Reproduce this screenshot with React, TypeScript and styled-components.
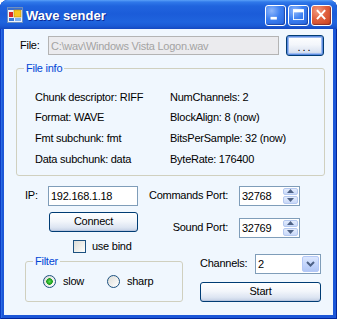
import React from "react";
import styled, { createGlobalStyle } from "styled-components";

const GlobalStyle = createGlobalStyle`
  html, body {
    margin: 0;
    padding: 0;
    background: #ffffff;
  }
  body {
    font-family: "Liberation Sans", Arial, sans-serif;
    font-size: 11px;
    color: #000;
  }
`;

const Window = styled.div`
  width: 337px;
  height: 319px;
  box-sizing: border-box;
  display: flex;
  flex-direction: column;
  border-radius: 8px 8px 0 0;
  overflow: hidden;
  background: #1c57d8;
  box-shadow: inset 1px 0 #0b3cc4, inset -1px -1px #00259c, inset 2px 0 #2a6be4;
`;

const TitleBar = styled.div`
  height: 29px;
  flex: none;
  display: flex;
  align-items: center;
  padding: 0 5px 0 7px;
  background: linear-gradient(
    180deg,
    #5aa0f8 0px,
    #3079ea 2px,
    #2064de 6px,
    #1b5cd9 14px,
    #1f64de 22px,
    #1b5ad5 26px,
    #1448c0 29px
  );
`;

const TitleIcon = styled.svg`
  width: 16px;
  height: 16px;
  flex: none;
`;

const TitleText = styled.div`
  flex: 1;
  margin-left: 3px;
  padding-top: 1px;
  color: #ffffff;
  font-family: "Liberation Sans", Arial, sans-serif;
  font-weight: bold;
  font-size: 13px;
  text-shadow: 1px 1px #0c2a96;
`;

const CaptionButtons = styled.div`
  display: flex;
  gap: 2px;
  margin-top: 2px;
`;

const CaptionButton = styled.div<{ $close?: boolean }>`
  width: 21px;
  height: 21px;
  box-sizing: border-box;
  border: 1px solid #ffffff;
  border-radius: 3px;
  display: flex;
  align-items: center;
  justify-content: center;
  background: ${({ $close }) =>
    $close
      ? "radial-gradient(circle at 30% 25%, #f29a80 0%, #e0603e 45%, #c93e1c 100%)"
      : "radial-gradient(circle at 30% 25%, #8fb7fb 0%, #3c7ff1 45%, #2462dc 100%)"};
  box-shadow: inset -1px -1px 1px rgba(0, 0, 60, 0.35);
`;

const Client = styled.div`
  flex: 1;
  margin: 0 4px 4px;
  background: #f0f7fe;
  display: flex;
  flex-direction: column;
  padding-top: 6px;
  letter-spacing: -0.25px;
`;

const FileRow = styled.div`
  display: flex;
  align-items: center;
  height: 21px;
  padding-left: 16px;
`;

const Label = styled.span<{ $width?: number }>`
  ${({ $width }) => ($width ? `width: ${$width}px; flex: none;` : "")}
  white-space: nowrap;
  line-height: 13px;
`;

const TextBox = styled.div<{ $disabled?: boolean; $width: number; $height: number }>`
  width: ${({ $width }) => $width}px;
  height: ${({ $height }) => $height}px;
  box-sizing: border-box;
  flex: none;
  display: flex;
  align-items: center;
  padding-left: 2px;
  white-space: nowrap;
  overflow: hidden;
  border: 1px solid ${({ $disabled }) => ($disabled ? "#b4b4b4" : "#7f9db9")};
  background: ${({ $disabled }) => ($disabled ? "#ebebee" : "#ffffff")};
  color: ${({ $disabled }) => ($disabled ? "#a3a3a3" : "#000000")};
`;

const Button = styled.div<{ $focused?: boolean }>`
  box-sizing: border-box;
  display: flex;
  align-items: center;
  justify-content: center;
  border: 1px solid #003c74;
  border-radius: 3px;
  background: linear-gradient(180deg, #ffffff 0%, #f3f6fb 45%, #dde5f2 80%, #c3cfe4 100%);
  box-shadow: ${({ $focused }) =>
    $focused
      ? "inset 0 0 0 1px #5d8be0, inset 0 0 0 2px #9dbcf0"
      : "inset 0 -1px #b9c6de"};
  color: #000;
  line-height: 13px;
`;

const BrowseButton = styled(Button)`
  width: 38px;
  height: 21px;
  margin-left: 7px;
  padding-top: 4px;
  font-size: 11px;
  letter-spacing: 2px;
`;

const GroupBox = styled.fieldset`
  margin: 0;
  padding: 0;
  min-width: 0;
  border: 1px solid #d0d0bf;
  border-radius: 3px;
`;

const GroupTitle = styled.legend`
  margin-left: 7px;
  padding: 0 2px;
  color: #0046d5;
  line-height: 13px;
  font-size: 11px;
`;

const InfoBox = styled(GroupBox)`
  margin: 6px 8px 0 12px;
`;

const InfoGrid = styled.div`
  display: grid;
  grid-template-columns: 135px auto;
  grid-auto-rows: 20.67px;
  align-items: center;
  padding: 12px 0 5px 18px;
  line-height: 13px;
`;

const SectionA = styled.div`
  display: flex;
  margin-top: 10px;
`;

const LeftA = styled.div`
  width: 140px;
  flex: none;
  display: flex;
  flex-direction: column;
`;

const IPRow = styled.div`
  display: flex;
  align-items: center;
  height: 20px;
  padding-left: 21px;
`;

const ConnectButton = styled(Button)`
  width: 89px;
  height: 20px;
  margin: 6px 0 0 45px;
`;

const RightA = styled.div`
  flex: 1;
  display: flex;
  flex-direction: column;
  gap: 12px;
  padding-right: 33px;
`;

const PortRow = styled.div`
  display: flex;
  justify-content: flex-end;
  align-items: center;
  height: 20px;
`;

const PortLabel = styled(Label)`
  margin-right: 11px;
`;

const Numeric = styled.div`
  width: 61px;
  height: 20px;
  box-sizing: border-box;
  display: flex;
  border: 1px solid #7f9db9;
  background: #ffffff;
`;

const FieldValue = styled.span`
  flex: 1;
  display: flex;
  align-items: center;
  padding-left: 2px;
`;

const SpinColumn = styled.div`
  width: 15px;
  display: flex;
  flex-direction: column;
  gap: 1px;
  padding: 1px 1px 1px 0;
`;

const SpinButton = styled.div`
  flex: 1;
  display: flex;
  align-items: center;
  justify-content: center;
  border: 1px solid #b5c9f0;
  border-radius: 2px;
  background: linear-gradient(180deg, #e3ecfd 0%, #c8d8f8 100%);
`;

const SectionB = styled.div`
  display: flex;
  margin-top: 2px;
`;

const LeftB = styled.div`
  width: 180px;
  flex: none;
  display: flex;
  flex-direction: column;
`;

const CheckRow = styled.div`
  display: flex;
  align-items: center;
  gap: 6px;
  height: 13px;
  padding-left: 69px;
`;

const CheckBox = styled.div`
  width: 13px;
  height: 13px;
  box-sizing: border-box;
  flex: none;
  border: 1px solid #1c5180;
  background: linear-gradient(135deg, #dcdcd7 0%, #f4f4f0 70%, #ffffff 100%);
`;

const FilterBox = styled(GroupBox)`
  width: 158px;
  box-sizing: border-box;
  margin: 2px 0 0 21px;
`;

const RadioRow = styled.div`
  display: flex;
  padding: 7px 0 13px 17px;
`;

const RadioItem = styled.div<{ $width?: number }>`
  display: flex;
  align-items: center;
  gap: 7px;
  ${({ $width }) => ($width ? `width: ${$width}px;` : "")}
  line-height: 13px;
`;

const RadioCircle = styled.div<{ $checked?: boolean }>`
  width: 13px;
  height: 13px;
  box-sizing: border-box;
  flex: none;
  border-radius: 50%;
  border: 1px solid #1c5180;
  background: ${({ $checked }) =>
    $checked
      ? "radial-gradient(circle at 50% 50%, #5fe05b 0, #2cb22a 2px, #1e9a1d 3px, transparent 3.5px), linear-gradient(135deg, #dcdcd7, #ffffff)"
      : "linear-gradient(135deg, #dcdcd7, #ffffff)"};
`;

const RightB = styled.div`
  flex: 1;
  display: flex;
  flex-direction: column;
  padding: 0 12px 0 16px;
`;

const ChannelsRow = styled.div`
  display: flex;
  align-items: center;
  height: 20px;
  margin-top: 14px;
`;

const ComboBox = styled.div`
  width: 66px;
  height: 20px;
  box-sizing: border-box;
  flex: none;
  margin-left: auto;
  display: flex;
  border: 1px solid #7f9db9;
  background: #ffffff;
`;

const DropButton = styled.div`
  width: 17px;
  margin: 1px;
  box-sizing: border-box;
  display: flex;
  align-items: center;
  justify-content: center;
  border: 1px solid #b4c8f6;
  border-radius: 2px;
  background: linear-gradient(180deg, #dce7fe 0%, #c1d3fb 60%, #b2c7f5 100%);
`;

const StartButton = styled(Button)`
  height: 20px;
  margin-top: 8px;
`;

const Arrow = ({ down }: { down?: boolean }) => (
  <svg width="7" height="4" viewBox="0 0 7 4">
    <path d={down ? "M0 0 H7 L3.5 4 Z" : "M0 4 H7 L3.5 0 Z"} fill="#4d6185" />
  </svg>
);

const info: [string, string][] = [
  ["Chunk descriptor: RIFF", "NumChannels: 2"],
  ["Format: WAVE", "BlockAlign: 8 (now)"],
  ["Fmt subchunk: fmt", "BitsPerSample: 32 (now)"],
  ["Data subchunk: data", "ByteRate: 176400"],
];

const NumericField = ({ value }: { value: string }) => (
  <Numeric>
    <FieldValue>{value}</FieldValue>
    <SpinColumn>
      <SpinButton>
        <Arrow />
      </SpinButton>
      <SpinButton>
        <Arrow down />
      </SpinButton>
    </SpinColumn>
  </Numeric>
);

export default function App() {
  return (
    <>
      <GlobalStyle />
      <Window>
        <TitleBar>
          <TitleIcon viewBox="0 0 16 16">
            <rect x="0.5" y="0.5" width="15" height="15" fill="#eef3fb" stroke="#6f8fbf" />
            <rect x="1" y="1" width="14" height="2" fill="#3a6fd0" />
            <rect x="2" y="5" width="4" height="5" fill="#d8262a" />
            <rect x="7" y="3" width="7" height="7" fill="#f7c521" stroke="#b88a10" strokeWidth="0.6" />
            <rect x="2" y="11" width="5" height="3" fill="#3a77d8" />
            <rect x="8" y="11" width="6" height="3" fill="#7fb0ef" />
          </TitleIcon>
          <TitleText>Wave sender</TitleText>
          <CaptionButtons>
            <CaptionButton>
              <svg width="21" height="21" viewBox="0 0 21 21">
                <rect x="5" y="12" width="7" height="3" fill="#fff" />
              </svg>
            </CaptionButton>
            <CaptionButton>
              <svg width="21" height="21" viewBox="0 0 21 21">
                <rect x="5" y="4" width="11" height="11" fill="none" stroke="#fff" strokeWidth="1" />
                <rect x="5" y="4" width="11" height="3" fill="#fff" />
              </svg>
            </CaptionButton>
            <CaptionButton $close>
              <svg width="21" height="21" viewBox="0 0 21 21">
                <path d="M5.5 4.5 L14.5 14.5 M14.5 4.5 L5.5 14.5" stroke="#fff" strokeWidth="2.2" />
              </svg>
            </CaptionButton>
          </CaptionButtons>
        </TitleBar>
        <Client>
          <FileRow>
            <Label $width={28}>File:</Label>
            <TextBox $disabled $width={231} $height={19}>
              C:\wav\Windows Vista Logon.wav
            </TextBox>
            <BrowseButton $focused>...</BrowseButton>
          </FileRow>

          <InfoBox>
            <GroupTitle>File info</GroupTitle>
            <InfoGrid>
              {info.flatMap(([a, b]) => [
                <span key={a}>{a}</span>,
                <span key={b}>{b}</span>,
              ])}
            </InfoGrid>
          </InfoBox>

          <SectionA>
            <LeftA>
              <IPRow>
                <Label $width={23}>IP:</Label>
                <TextBox $width={90} $height={20}>
                  192.168.1.18
                </TextBox>
              </IPRow>
              <ConnectButton>Connect</ConnectButton>
            </LeftA>
            <RightA>
              <PortRow>
                <PortLabel>Commands Port:</PortLabel>
                <NumericField value="32768" />
              </PortRow>
              <PortRow>
                <PortLabel>Sound Port:</PortLabel>
                <NumericField value="32769" />
              </PortRow>
            </RightA>
          </SectionA>

          <SectionB>
            <LeftB>
              <CheckRow>
                <CheckBox />
                <Label>use bind</Label>
              </CheckRow>
              <FilterBox>
                <GroupTitle>Filter</GroupTitle>
                <RadioRow>
                  <RadioItem $width={64}>
                    <RadioCircle $checked />
                    <span>slow</span>
                  </RadioItem>
                  <RadioItem>
                    <RadioCircle />
                    <span>sharp</span>
                  </RadioItem>
                </RadioRow>
              </FilterBox>
            </LeftB>
            <RightB>
              <ChannelsRow>
                <Label>Channels:</Label>
                <ComboBox>
                  <FieldValue>2</FieldValue>
                  <DropButton>
                    <svg width="9" height="6" viewBox="0 0 9 6">
                      <path d="M1 1 L4.5 4.5 L8 1" fill="none" stroke="#4d6185" strokeWidth="2" />
                    </svg>
                  </DropButton>
                </ComboBox>
              </ChannelsRow>
              <StartButton>Start</StartButton>
            </RightB>
          </SectionB>
        </Client>
      </Window>
    </>
  );
}
